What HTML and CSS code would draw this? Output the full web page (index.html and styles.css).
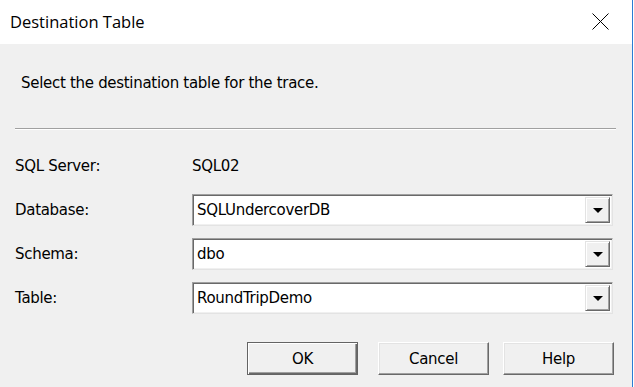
FILE: index.html
```html
<!DOCTYPE html>
<html>

<head>
    <title>Destination Table</title>
    <link rel="stylesheet" href="styles.css">
</head>

<body>

    <div class="window">
        <!-- Title bar -->
        <div class="titlebar">
            <span class="title">Destination Table</span>
            <svg class="close" width="17" height="17" viewBox="0 0 17 17">
                <path d="M0.5 0.5 L16.5 16.5 M16.5 0.5 L0.5 16.5" stroke="#000" stroke-width="1" fill="none"/>
            </svg>
        </div>

        <!-- Dialog body -->
        <div class="content">
            <p class="prompt">Select the destination table for the trace.</p>
            <div class="separator"></div>

            <div class="row server-row">
                <span class="label">SQL Server:</span>
                <span class="value">SQL02</span>
            </div>

            <div class="row">
                <span class="label">Database:</span>
                <div class="combo">
                    <span class="combo-text">SQLUndercoverDB</span>
                    <span class="combo-btn"><span class="arrow"></span></span>
                </div>
            </div>
            <div class="row">
                <span class="label">Schema:</span>
                <div class="combo">
                    <span class="combo-text">dbo</span>
                    <span class="combo-btn"><span class="arrow"></span></span>
                </div>
            </div>
            <div class="row">
                <span class="label">Table:</span>
                <div class="combo">
                    <span class="combo-text">RoundTripDemo</span>
                    <span class="combo-btn"><span class="arrow"></span></span>
                </div>
            </div>

            <div class="buttons">
                <button class="btn default">OK</button>
                <button class="btn cancel">Cancel</button>
                <button class="btn">Help</button>
            </div>
        </div>
    </div>

</body>

</html>
```

FILE: styles.css
```css
body {
    margin: 0;
    width: 634px;
    height: 387px;
    overflow: hidden;
    background-color: #fff;
    font-family: 'DejaVu Sans', sans-serif;
    font-size: 15px;
    letter-spacing: -0.3px;
    color: #000;
}

.window {
    width: 632px;
    height: 387px;
    border-right: 1px solid #2b7cd3;
    display: flex;
    flex-direction: column;
}

.titlebar {
    height: 44px;
    background-color: #fff;
    display: flex;
    align-items: center;
    justify-content: space-between;
}

.title {
    font-family: 'Open Sans', sans-serif;
    font-size: 16.5px;
    letter-spacing: 0;
    padding-left: 10px;
    margin-top: -1px;
}

.close {
    margin-right: 23px;
    margin-top: -1px;
}

.content {
    flex: 1;
    background-color: #f0f0f0;
    display: flex;
    flex-direction: column;
}

.prompt {
    margin: 29px 0 0 0;
    padding-left: 21px;
    line-height: 20px;
    color: #000;
}

.separator {
    margin: 35px 16px 0 15px;
    border-top: 1px solid #a0a0a0;
    border-bottom: 1px solid #fff;
}

.row {
    display: flex;
    align-items: center;
    height: 32px;
    margin-top: 12px;
    padding-left: 15px;
}

.server-row {
    height: 20px;
    margin-top: 26px;
    margin-bottom: 6px;
}

.label {
    width: 177px;
    line-height: 20px;
}

.value {
    line-height: 20px;
}

.combo {
    box-sizing: border-box;
    width: 421px;
    height: 32px;
    background-color: #fff;
    border: 1px solid;
    border-color: #a0a0a0 #e3e3e3 #e3e3e3 #a0a0a0;
    box-shadow: inset 1px 1px 0 #696969, inset -1px -1px 0 #f0f0f0;
    display: flex;
    align-items: center;
    justify-content: space-between;
    padding: 2px 2px 2px 4px;
}

.combo-text {
    line-height: 20px;
}

.combo-btn {
    box-sizing: border-box;
    width: 25px;
    height: 26px;
    background-color: #f0f0f0;
    border: 1px solid;
    border-color: #e3e3e3 #696969 #696969 #e3e3e3;
    box-shadow: inset 1px 1px 0 #fff, inset -1px -1px 0 #a0a0a0;
    display: flex;
    align-items: center;
    justify-content: center;
}

.arrow {
    width: 0;
    height: 0;
    border-left: 5px solid transparent;
    border-right: 5px solid transparent;
    border-top: 5px solid #000;
    margin-top: 1px;
}

.buttons {
    display: flex;
    margin-top: 28px;
    padding-left: 247px;
}

.btn {
    box-sizing: border-box;
    width: 111px;
    height: 33px;
    margin-right: 18px;
    font-family: 'DejaVu Sans', sans-serif;
    font-size: 15px;
    letter-spacing: -0.3px;
    color: #000;
    background-color: #f0f0f0;
    border: 1px solid;
    border-color: #fff #696969 #696969 #fff;
    box-shadow: inset -1px -1px 0 #a0a0a0, inset 1px 1px 0 #e3e3e3;
    padding: 0;
}

.btn.default {
    border: 1px solid #646464;
    box-shadow: inset 1px 1px 0 #fff, inset -1px -1px 0 #696969, inset -2px -2px 0 #a0a0a0;
    margin-right: 20px;
}

.btn.cancel {
    margin-right: 14px;
}
```
